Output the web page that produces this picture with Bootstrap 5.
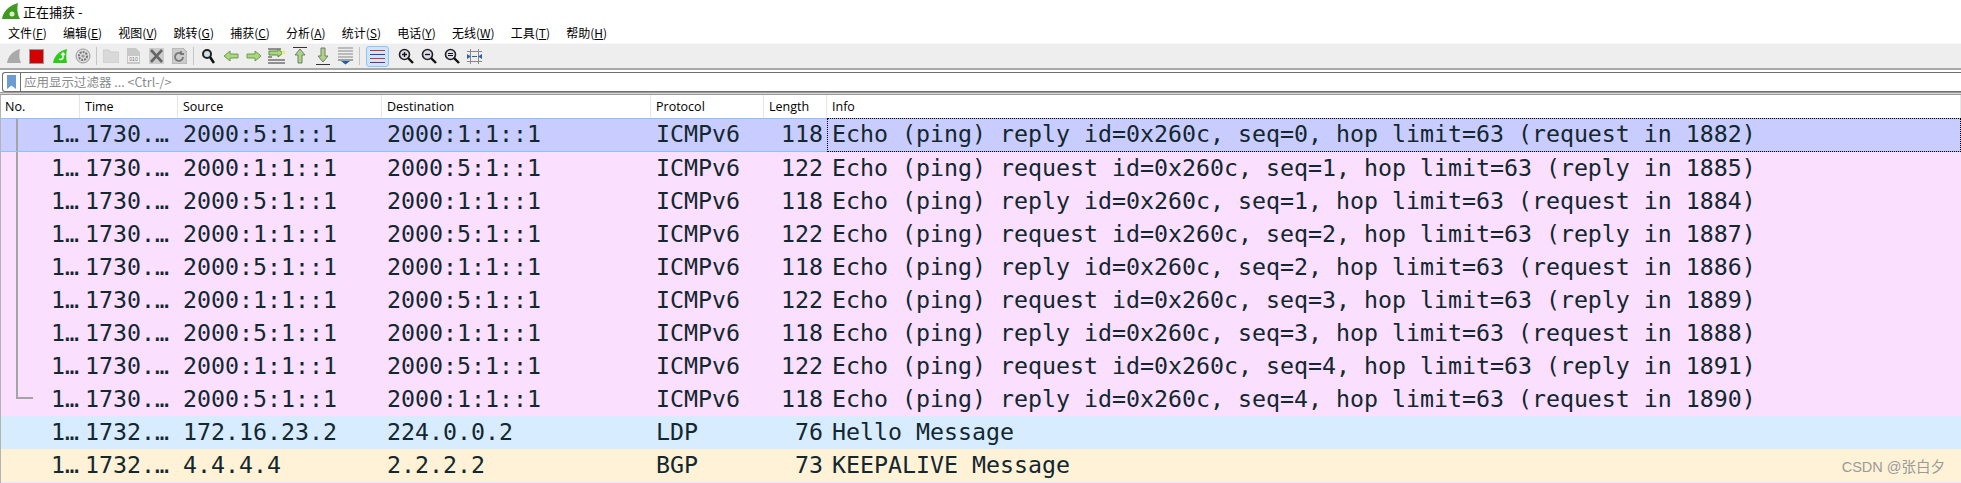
<!DOCTYPE html>
<html lang="zh-CN">
<head>
    <meta charset="UTF-8">
    <meta name="viewport" content="width=device-width, initial-scale=1.0">
    <title>正在捕获 -</title>
    <link href="https://cdn.jsdelivr.net/npm/bootstrap@5.3.0/dist/css/bootstrap.min.css" rel="stylesheet">
    <style>
        html, body { height: 483px; overflow: hidden; background: #fff; }
        body { font-family: "Noto Sans CJK SC", "Noto Sans", sans-serif; font-size: 12px; color: #000; position: relative; }
        .title-row { height: 23px; padding-left: 2px; gap: 3px; font-size: 13px; }
        .menu-row { height: 20px; padding-left: 8px; gap: 16.2px; font-size: 12px; }
        .menu-row u { text-underline-offset: 1px; }
        .tool-row { height: 27px; border-top: 1px solid #f8f8f8; border-bottom: 2px solid #a8a8a8; background: #eee; padding-left: 2px; }
        .tool-btn { width: 23px; height: 22px; flex: none; display: flex; align-items: center; }
        .tool-btn svg { display: block; margin: auto; }
        .tool-sep { width: 1px; height: 18px; background: #c4c4c4; margin: 0 2px; flex: none; }
        .tool-on { width: 23px; height: 21px; background: #cde6fb; border: 1px solid #8fc5f2; border-radius: 3px; margin: 0 5px 0 4px; flex: none; }
        .filter-row { height: 20px; margin: 2px 0 0 2px; border: 1px solid #707070; border-right: 0; border-radius: 3px 0 0 3px; color: #8b8b8b; font-size: 12.5px; }
        .filter-mark { width: 18px; height: 100%; border-right: 1px solid #707070; flex: none; }
        .filter-text { padding-left: 3px; }
        .list-top { height: 3px; border-top: 1px solid #9a9a9a; border-bottom: 1px solid #9a9a9a; background: #d8d8d8; }
        .pkt-wrap { border-left: 1px solid #b4b4b4; }
        .pkt-table.table { table-layout: fixed; width: 1960px; margin: 0; font-family: "DejaVu Sans Mono", "Liberation Mono", monospace; font-size: 23.25px; --bs-table-color: #12272e; --bs-table-border-color: transparent; border-collapse: separate; border-spacing: 0; }
        .pkt-table.table > :not(caption) > * > * { padding: 0 4px 2px 5px; height: 33px; line-height: 30px; white-space: nowrap; overflow: hidden; border: 0; box-shadow: none; vertical-align: middle; color: #12272e; position: relative; }
        .pkt-table.table > thead > tr > th { height: 23px; line-height: 22px; padding: 0 4px 0 5px; background: #fff; color: #000; font-family: "Open Sans", sans-serif; font-size: 12.5px; font-weight: 400; border-right: 1px solid #e6e6e6; }
        .pkt-table.table > thead > tr > th:first-child { padding-left: 4px; }
        .pkt-table.table > tbody > tr > td:first-child { text-align: right; padding: 0 1px 2px 0; overflow: visible; }
        .pkt-icmp { --bs-table-bg: #fadfff; }
        .pkt-ldp { --bs-table-bg: #d8ecff; }
        .pkt-bgp { --bs-table-bg: #fff2d6; }
        .pkt-sel { --bs-table-bg: #c8ccff; }
        .pkt-table.table > tbody > .pkt-sel > td { border-top: 1px solid #92c0f5; border-bottom: 1px solid #92c0f5; }
        .pkt-table.table > tbody > .pkt-sel > td.pkt-focus { outline: 1px dotted #000; outline-offset: -1px; }
        .cell-r { text-align: right; }
        .tree-line::before { content: ""; position: absolute; left: 15px; top: 0; bottom: 0; width: 2px; background: #a4a4a4; }
        .tree-end::before { content: ""; position: absolute; left: 15px; top: 0; height: 16px; width: 17px; border-left: 2px solid #a4a4a4; border-bottom: 2px solid #a4a4a4; }
        .list-foot { height: 2px; background: #e7e6ff; }
        .water-mark { position: absolute; right: 16px; top: 457px; color: #9a9a9a; font-family: "Liberation Sans", "Noto Sans CJK SC", sans-serif; font-size: 14.5px; line-height: 20px; }
    </style>
</head>
<body>
<div class="title-row d-flex align-items-center">
    <svg width="18" height="17" viewBox="0 0 18 17"><path d="M0 16C1 9 6 3 16 0c-1 5-1 11 2 16z" fill="#3f9a22"/><circle cx="10" cy="11" r="2.500" fill="#d8efc8"/></svg>
    <span>正在捕获 -</span>
</div>
<div class="menu-row d-flex align-items-center">
    <span>文件(<u>F</u>)</span><span>编辑(<u>E</u>)</span><span>视图(<u>V</u>)</span><span>跳转(<u>G</u>)</span><span>捕获(<u>C</u>)</span><span>分析(<u>A</u>)</span><span>统计(<u>S</u>)</span><span>电话(<u>Y</u>)</span><span>无线(<u>W</u>)</span><span>工具(<u>T</u>)</span><span>帮助(<u>H</u>)</span>
</div>
<div class="tool-row d-flex align-items-center">
    <div class="tool-btn"><svg width="16" height="16" viewBox="0 0 16 16"><path d="M1 15C2 9 6 3 14 1c-1 5-1 10 1 14z" fill="#aaa"/></svg></div>
    <div class="tool-btn"><svg width="15" height="15" viewBox="0 0 15 15"><rect x=".5" y=".5" width="14" height="14" fill="#d40000" stroke="#999"/></svg></div>
    <div class="tool-btn"><svg width="16" height="16" viewBox="0 0 16 16"><path d="M1 15C2 9 6 3 15 1c-1 5-1 10 0 14z" fill="#2ecc18"/><path d="M7 11a3 3 0 0 0 4-1V6M9 7l2-2 2 2" fill="none" stroke="#fff" stroke-width="1.400"/></svg></div>
    <div class="tool-btn"><svg width="16" height="16" viewBox="0 0 16 16"><circle cx="8" cy="8" r="7" fill="#ddd" stroke="#999"/><circle cx="8" cy="8" r="4" fill="none" stroke="#777" stroke-width="2" stroke-dasharray="2 1"/><circle cx="8" cy="8" r="1.600" fill="#999"/></svg></div>
    <div class="tool-sep"></div>
    <div class="tool-btn"><svg width="16" height="14" viewBox="0 0 16 14"><path d="M0 1h6l1 2h9v11H0z" fill="#d9d9d9" stroke="#ccc"/></svg></div>
    <div class="tool-btn"><svg width="15" height="16" viewBox="0 0 15 16"><path d="M1 0h9l4 4v12H1z" fill="#c8c8c8"/><rect x="2" y="8" width="11" height="6" fill="#eee"/><text x="7.500" y="13" font-size="5" text-anchor="middle" fill="#777" font-family="Liberation Sans">010</text></svg></div>
    <div class="tool-btn"><svg width="15" height="16" viewBox="0 0 15 16"><path d="M0 0h15v16H0z" fill="#ccc"/><path d="M2 2l11 12M13 2L2 14" stroke="#666" stroke-width="2.600"/></svg></div>
    <div class="tool-btn"><svg width="15" height="16" viewBox="0 0 15 16"><path d="M0 0h11l4 4v12H0z" fill="#ccc" stroke="#aaa"/><path d="M11 9a4 4 0 1 1-2-3.500M9 3v3h3" fill="none" stroke="#777" stroke-width="1.800"/></svg></div>
    <div class="tool-sep"></div>
    <div class="tool-btn"><svg width="14" height="16" viewBox="0 0 14 16"><circle cx="6" cy="6" r="4" fill="#cfe0ea" stroke="#222" stroke-width="2"/><path d="M9 9l4 6" stroke="#111" stroke-width="2.600"/></svg></div>
    <div class="tool-btn"><svg width="16" height="12" viewBox="0 0 16 12"><path d="M1 6l6-5v3h8v4H7v3z" fill="#a7d97c" stroke="#6f9a50"/></svg></div>
    <div class="tool-btn"><svg width="16" height="12" viewBox="0 0 16 12"><path d="M15 6L9 1v3H1v4h8v3z" fill="#a7d97c" stroke="#6f9a50"/></svg></div>
    <div class="tool-btn"><svg width="17" height="16" viewBox="0 0 17 16"><path d="M0 1h13M0 12h17M0 15h17M0 9h4" stroke="#333"/><path d="M1 3h9V1l5 4-5 4V7H1z" fill="#a7d97c" stroke="#5f8a40"/><rect x="14" y="3" width="3" height="3" fill="#f3ec6a"/></svg></div>
    <div class="tool-btn"><svg width="14" height="18" viewBox="0 0 14 18"><path d="M0 .5h14" stroke="#333"/><path d="M7 2l5 6H9v8H5V8H2z" fill="#a7d97c" stroke="#777"/></svg></div>
    <div class="tool-btn"><svg width="14" height="18" viewBox="0 0 14 18"><path d="M0 17.500h14" stroke="#333"/><path d="M7 15l5-6H9V1H5v8H2z" fill="#a7d97c" stroke="#777"/></svg></div>
    <div class="tool-btn"><svg width="15" height="18" viewBox="0 0 15 18"><path d="M0 1h15M0 4h15M0 7h15M0 10h15" stroke="#888"/><path d="M0 13h15" stroke="#555"/><path d="M3 14h9l-4.500 3.500z" fill="#1f5ea8"/></svg></div>
    <div class="tool-sep"></div>
    <div class="tool-on d-flex align-items-center justify-content-center"><svg width="15" height="15" viewBox="0 0 15 15"><path d="M0 1.500h15" stroke="#d03030"/><path d="M0 5.500h15" stroke="#3040b0"/><path d="M0 9.500h15" stroke="#d03030"/><path d="M0 13.500h15" stroke="#703080"/></svg></div>
    <div class="tool-btn"><svg width="16" height="16" viewBox="0 0 16 16"><circle cx="6.500" cy="6.500" r="5" fill="#dde" stroke="#222" stroke-width="1.600"/><path d="M4 6.500h5M6.500 4v5" stroke="#111" stroke-width="1.300"/><path d="M10 10l5 5" stroke="#111" stroke-width="2.400"/></svg></div>
    <div class="tool-btn"><svg width="16" height="16" viewBox="0 0 16 16"><circle cx="6.500" cy="6.500" r="5" fill="#dde" stroke="#222" stroke-width="1.600"/><path d="M4 6.500h5" stroke="#111" stroke-width="1.300"/><path d="M10 10l5 5" stroke="#111" stroke-width="2.400"/></svg></div>
    <div class="tool-btn"><svg width="16" height="16" viewBox="0 0 16 16"><circle cx="6.500" cy="6.500" r="5" fill="#dde" stroke="#222" stroke-width="1.600"/><path d="M4 5.500h5M4 7.500h5" stroke="#111"/><path d="M10 10l5 5" stroke="#111" stroke-width="2.400"/></svg></div>
    <div class="tool-btn"><svg width="15" height="15" viewBox="0 0 15 15"><path d="M3.500 0v15M11.500 0v15M0 2.500h15M0 12.500h15" stroke="#888"/><path d="M0 5l4 2.500L0 10zM15 5l-4 2.500 4 2.500z" fill="#2a62a8"/><path d="M5 7.500h5" stroke="#2a62a8"/></svg></div>
</div>
<div class="filter-row d-flex align-items-center">
    <div class="filter-mark d-flex align-items-center justify-content-center"><svg width="9" height="14" viewBox="0 0 9 14"><path d="M0 0h9v14L4.500 10.500 0 14z" fill="#6e9bd0"/></svg></div>
    <span class="filter-text">应用显示过滤器 ... &lt;Ctrl-/&gt;</span>
</div>
<div class="list-top"></div>
<div class="pkt-wrap">
    <table class="table pkt-table">
        <colgroup>
            <col style="width: 79px"><col style="width: 98px"><col style="width: 204px"><col style="width: 269px"><col style="width: 113px"><col style="width: 63px"><col>
        </colgroup>
        <thead>
        <tr><th>No.</th><th>Time</th><th>Source</th><th>Destination</th><th>Protocol</th><th>Length</th><th>Info</th></tr>
        </thead>
        <tbody>
        <tr class="pkt-sel"><td class="tree-line">1…</td><td>1730.…</td><td>2000:5:1::1</td><td>2000:1:1::1</td><td>ICMPv6</td><td class="cell-r">118</td><td class="pkt-focus">Echo (ping) reply id=0x260c, seq=0, hop limit=63 (request in 1882)</td></tr>
        <tr class="pkt-icmp"><td class="tree-line">1…</td><td>1730.…</td><td>2000:1:1::1</td><td>2000:5:1::1</td><td>ICMPv6</td><td class="cell-r">122</td><td>Echo (ping) request id=0x260c, seq=1, hop limit=63 (reply in 1885)</td></tr>
        <tr class="pkt-icmp"><td class="tree-line">1…</td><td>1730.…</td><td>2000:5:1::1</td><td>2000:1:1::1</td><td>ICMPv6</td><td class="cell-r">118</td><td>Echo (ping) reply id=0x260c, seq=1, hop limit=63 (request in 1884)</td></tr>
        <tr class="pkt-icmp"><td class="tree-line">1…</td><td>1730.…</td><td>2000:1:1::1</td><td>2000:5:1::1</td><td>ICMPv6</td><td class="cell-r">122</td><td>Echo (ping) request id=0x260c, seq=2, hop limit=63 (reply in 1887)</td></tr>
        <tr class="pkt-icmp"><td class="tree-line">1…</td><td>1730.…</td><td>2000:5:1::1</td><td>2000:1:1::1</td><td>ICMPv6</td><td class="cell-r">118</td><td>Echo (ping) reply id=0x260c, seq=2, hop limit=63 (request in 1886)</td></tr>
        <tr class="pkt-icmp"><td class="tree-line">1…</td><td>1730.…</td><td>2000:1:1::1</td><td>2000:5:1::1</td><td>ICMPv6</td><td class="cell-r">122</td><td>Echo (ping) request id=0x260c, seq=3, hop limit=63 (reply in 1889)</td></tr>
        <tr class="pkt-icmp"><td class="tree-line">1…</td><td>1730.…</td><td>2000:5:1::1</td><td>2000:1:1::1</td><td>ICMPv6</td><td class="cell-r">118</td><td>Echo (ping) reply id=0x260c, seq=3, hop limit=63 (request in 1888)</td></tr>
        <tr class="pkt-icmp"><td class="tree-line">1…</td><td>1730.…</td><td>2000:1:1::1</td><td>2000:5:1::1</td><td>ICMPv6</td><td class="cell-r">122</td><td>Echo (ping) request id=0x260c, seq=4, hop limit=63 (reply in 1891)</td></tr>
        <tr class="pkt-icmp"><td class="tree-end">1…</td><td>1730.…</td><td>2000:5:1::1</td><td>2000:1:1::1</td><td>ICMPv6</td><td class="cell-r">118</td><td>Echo (ping) reply id=0x260c, seq=4, hop limit=63 (request in 1890)</td></tr>
        <tr class="pkt-ldp"><td>1…</td><td>1732.…</td><td>172.16.23.2</td><td>224.0.0.2</td><td>LDP</td><td class="cell-r">76</td><td>Hello Message</td></tr>
        <tr class="pkt-bgp"><td>1…</td><td>1732.…</td><td>4.4.4.4</td><td>2.2.2.2</td><td>BGP</td><td class="cell-r">73</td><td>KEEPALIVE Message</td></tr>
        </tbody>
    </table>
    <div class="list-foot"></div>
</div>
<div class="water-mark">CSDN @张白夕</div>
<script src="https://cdn.jsdelivr.net/npm/bootstrap@5.3.0/dist/js/bootstrap.bundle.min.js"></script>
</body>
</html>
